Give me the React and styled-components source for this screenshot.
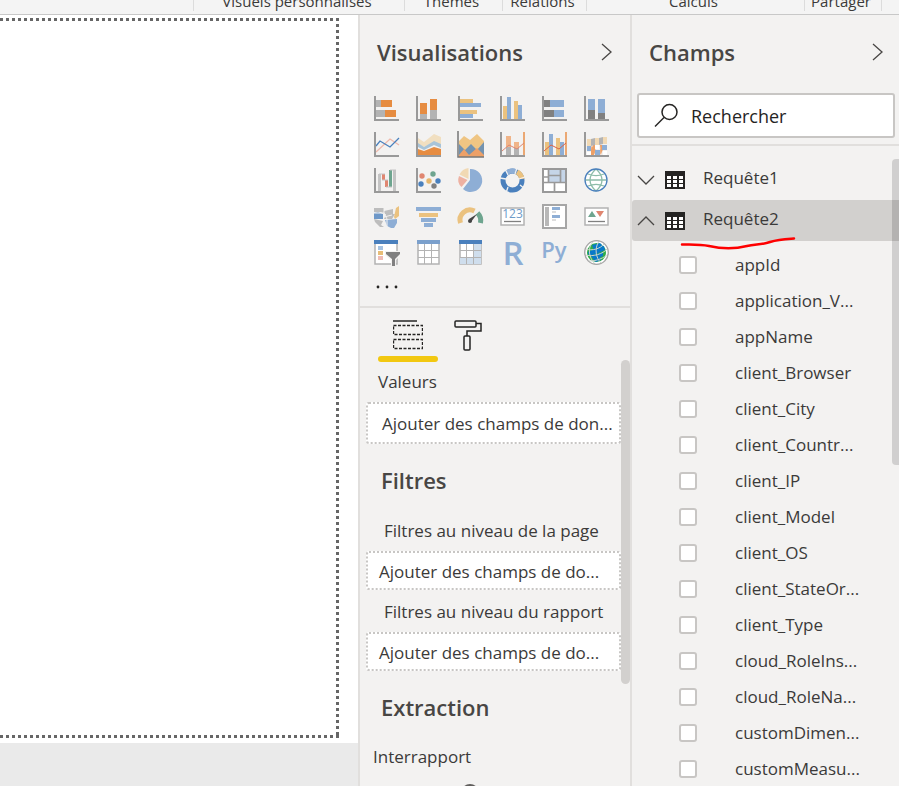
import React from 'react';
import styled, { createGlobalStyle } from 'styled-components';

const GlobalStyle = createGlobalStyle`
  *, *::before, *::after { box-sizing: border-box; }
  body {
    margin: 0;
    font-family: "Open Sans", "Noto Sans", sans-serif;
    font-size: 17px;
    line-height: 24px;
    color: #3b3a39;
    background: #f3f2f1;
  }
  button, input { font: inherit; color: inherit; }
  svg { display: block; }
`;

const Page = styled.div`
  display: flex;
  flex-direction: column;
  height: 100vh;
  overflow: hidden;
`;

const Ribbon = styled.header`
  display: grid;
  grid-template-columns: 194fr 211fr 98fr 84fr 218fr 77fr 17fr;
  flex: none;
  height: 15px;
  overflow: hidden;
  background: #f4f4f4;
  border-bottom: 1px solid #c8c8c8;
`;

const RibbonGroup = styled.div`
  display: flex;
  align-items: flex-end;
  justify-content: center;
  height: 11px;
  padding-right: 4px;
  border-right: 1px solid #dcdcdc;
  font-size: 15px;
  line-height: 20px;
  white-space: nowrap;

  &:last-child { border-right: 0; }
`;

const Workspace = styled.div`
  display: flex;
  flex: 1;
  min-height: 0;
`;

const CanvasArea = styled.main`
  display: flex;
  flex: 1;
  min-width: 0;
  padding-bottom: 43px;
  background: #eaeaea;
`;

const Sheet = styled.div`
  flex: 1;
  padding: 3px 19px 5px 0;
  background: #fff;
`;

const dots = (dir) => `repeating-linear-gradient(${dir}, #666 0 3px, transparent 3px 6px)`;

const PageOutline = styled.div`
  height: 100%;
  background:
    ${dots('to left')} top / 100% 3px no-repeat,
    ${dots('to left')} bottom / 100% 3px no-repeat,
    ${dots('to bottom')} right / 3px 100% no-repeat;
`;

const Panel = styled.aside`
  display: flex;
  flex-direction: column;
  flex: none;
  width: ${(p) => p.$width}px;
  border-left: 2px solid #e1dfdd;
  background: #f3f2f1;
  overflow: hidden;
`;

const PanelHeader = styled.div`
  display: flex;
  align-items: center;
  justify-content: space-between;
  flex: none;
  height: 76px;
  padding: 0 ${(p) => p.$end}px 3px 17px;
`;

const Title = styled.h2`
  margin: 0;
  font-size: 22px;
  line-height: 32px;
  font-weight: 600;
  color: #484644;
`;

const PlainButton = styled.button`
  display: flex;
  padding: 0;
  border: 0;
  background: none;
  cursor: pointer;
`;

const Gallery = styled.div`
  display: grid;
  grid-template-columns: repeat(6, 42px);
  grid-auto-rows: 36px;
  flex: none;
  padding: 5px 0 0 14px;
`;

const MoreButton = styled(PlainButton)`
  margin: 8px 0 16px 16px;
`;

const Tabs = styled.div`
  display: flex;
  flex: none;
  padding: 12px 0 0 18px;
  border-top: 2px solid #e1dfdd;
`;

const Tab = styled(PlainButton)`
  position: relative;
  justify-content: center;
  width: 60px;
  height: 42px;

  &::after {
    content: "";
    position: absolute;
    inset: auto 0 0;
    height: 6px;
    border-radius: 3px;
    background: ${(p) => (p.$active ? '#f2c811' : 'transparent')};
  }
`;

const Wells = styled.div`
  display: flex;
  flex: 1;
  min-height: 0;
  margin-top: -2px;
`;

const WellList = styled.div`
  flex: 1;
  min-width: 0;
  padding: 2px 0 0 6px;
`;

const Thumb = styled.div`
  width: 9px;
  height: 324px;
  border-radius: 5px;
  background: #d2d0ce;
`;

const WellLabel = styled.div`
  padding: ${(p) => p.$pad};
  white-space: nowrap;
`;

const DropZone = styled.div`
  display: flex;
  align-items: center;
  height: ${(p) => (p.$large ? 42 : 39)}px;
  padding: 2px 0 0 ${(p) => (p.$large ? 14 : 11)}px;
  border: 2px dotted #c8c6c4;
  border-radius: 3px;
  background: #fff;
  white-space: nowrap;
`;

const SectionTitle = styled(Title)`
  padding: ${(p) => p.$pad};
`;

const ToggleKnob = styled.div`
  width: 18px;
  height: 18px;
  margin: 15px 0 0 95px;
  border-radius: 50%;
  background: #605e5c;
`;

const SearchBar = styled.div`
  flex: none;
  padding: 2px 4px 6px 5px;
  border-bottom: 2px solid #e1dfdd;
`;

const SearchBox = styled.label`
  display: flex;
  align-items: center;
  gap: 12px;
  height: 45px;
  padding-left: 15px;
  border: 2px solid #c8c6c4;
  border-radius: 3px;
  background: #fff;
`;

const SearchInput = styled.input`
  flex: 1;
  min-width: 0;
  padding: 0;
  border: 0;
  outline: 0;
  background: transparent;
  font-size: 18px;

  &::placeholder { color: #252423; opacity: 1; }
`;

const FieldTree = styled.div`
  position: relative;
  flex: 1;
  min-height: 0;
  padding-top: 13px;
`;

const TreeThumb = styled.div`
  position: absolute;
  top: 13px;
  right: 0;
  width: 7px;
  height: 306px;
  border-radius: 4px 0 0 4px;
  background: rgba(0, 0, 0, 0.14);
`;

const TableRow = styled.button`
  position: relative;
  display: flex;
  align-items: center;
  width: 100%;
  height: 41px;
  padding: 0 0 0 5px;
  border: 0;
  border-radius: 3px 0 0 3px;
  background: ${(p) => (p.$selected ? '#d2d0ce' : 'transparent')};
`;

const TableName = styled.span`
  margin-left: 18px;
  padding-bottom: 4px;
`;

const Underline = styled.svg`
  position: absolute;
  left: 48px;
  top: 35px;
  z-index: 1;
`;

const FieldList = styled.ul`
  margin: 0;
  padding: 6px 0 0 47px;
  list-style: none;
`;

const Field = styled.label`
  display: flex;
  align-items: center;
  gap: 38px;
  height: 36px;
  white-space: nowrap;
`;

const Check = styled.input`
  appearance: none;
  flex: none;
  width: 18px;
  height: 18px;
  margin: 0;
  border: 2px solid #c8c6c4;
  border-radius: 3px;
  background: #fff;
`;

const O = '#e68c41';
const G = '#b3b3b3';
const D = '#808080';
const B = '#8eaed5';
const Y = '#ebc27f';
const DB = '#4a80bd';
const RED = '#e08670';
const GR = '#6ea58f';
const AX = '#999';

const Axes = () => <path d="M1 0V24H25" fill="none" stroke={AX} strokeWidth="2" />;
const Bars = ({ items }) => items.map(([x, y, w, h, fill], i) => (
  <rect key={i} x={x} y={y} width={w} height={h} fill={fill} />
));
const Chart = ({ items }) => <><Bars items={items} /><Axes /></>;

const visuals = [
  ['Barres empilées', <Chart items={[[2, 4, 5, 7, G], [7, 4, 11, 7, O], [2, 14, 9, 7, G], [11, 14, 11, 7, O]]} />],
  ['Histogramme empilé', <Chart items={[[4, 7, 7, 11, O], [4, 18, 7, 5, G], [14, 3, 7, 11, O], [14, 14, 7, 9, G]]} />],
  ['Barres groupées', <Chart items={[[2, 3, 13, 4, Y], [2, 7, 21, 4, B], [2, 14, 17, 4, Y], [2, 18, 13, 4, B]]} />],
  ['Histogramme groupé', <Chart items={[[3, 10, 4, 13, Y], [7, 1, 4, 22, B], [14, 5, 4, 18, Y], [18, 9, 4, 14, B]]} />],
  ['Barres empilées 100 %', <Chart items={[[2, 4, 6, 7, D], [8, 4, 14, 7, B], [2, 14, 10, 7, D], [12, 14, 10, 7, B]]} />],
  ['Histogramme empilé 100 %', <Chart items={[[4, 3, 7, 11, B], [4, 14, 7, 9, D], [14, 3, 7, 14, B], [14, 17, 7, 6, D]]} />],
  ['Courbes', <>
    <path d="M2 20L16 7l9 6" fill="none" stroke="#efb9ab" strokeWidth="1.3" />
    <path d="M2 14l4-5 10 6 9-9" fill="none" stroke={DB} strokeWidth="1.3" /><Axes /></>],
  ['Aires', <>
    <path d="M2 6l6 4L18 2l7 3v8l-7-3-10 5-6-3z" fill="#f1dfc0" />
    <path d="M2 11l6 4 10-6 7 3v4l-7-3-10 5-6-3z" fill="#a8c4d8" />
    <path d="M2 17l6 2 10-4 7 2v6H2z" fill={O} /><Axes /></>],
  ['Aires empilées', <>
    <path d="M1 9l5-5 6 4 7-6 7 7v16H1z" fill="#efc583" />
    <path d="M1 12l6 6 6-6 6 6 7-8v15H1z" fill="#7393b0" />
    <path d="M1 23l5-6 5 6 8-7 7 7v2H1z" fill="#eda067" />
    <path d="M0 -1V25H26" fill="none" stroke="#777" strokeWidth="1.5" /></>],
  ['Courbe et histogramme empilé', <>
    <Chart items={[[6, 4, 5, 11, '#f0b488'], [6, 15, 5, 8, G], [14, 10, 5, 6, '#f0b488'], [14, 16, 5, 7, G]]} />
    <path d="M24 0V23" stroke="#eba873" strokeWidth="2" />
    <path d="M2 19l7-6 8 4 7-6" fill="none" stroke={RED} /></>],
  ['Courbe et histogramme groupé', <>
    <Chart items={[[3, 10, 4, 13, Y], [7, 2, 4, 21, B], [14, 6, 4, 17, Y], [18, 10, 4, 13, B]]} />
    <path d="M24 0V23" stroke="#eba873" strokeWidth="2" />
    <path d="M2 19l7-6 8 4 7-6" fill="none" stroke="#dd6246" /></>],
  ['Ruban', <>
    <path d="M7 14l5 4v5l-5-5zM16 18l3-5v5l-3 5z" fill="#f0b488" />
    <path d="M7 18l2-5h3l-2 10H7zM16 13h3l-2 10z" fill="#eda067" />
    <Bars items={[[3, 7, 4, 7, '#f1d9b4'], [11, 6, 4, 7, '#f1d9b4'], [19, 5, 4, 7, '#f1d9b4'], [3, 14, 4, 5, B], [18, 13, 5, 5, B], [11, 18, 5, 5, B], [3, 20, 4, 3, '#fff'], [19, 19, 4, 4, '#fff'], [11, 13, 4, 4, '#fff']]} />
    <path d="M7 7l4-1v7l-4 1zM15 6l4-1v7l-4 1z" fill={G} /><Axes /></>],
  ['Cascade', <>
    <Chart items={[[4, 6, 3, 17, '#c4c4c4'], [8, 6, 3, 6, RED], [11, 12, 3, 7, RED], [15, 2, 3, 17, GR], [19, 2, 3, 21, '#c4c4c4']]} />
    <path d="M5 6h6M8 12h6M12 19h6M16 2h6" stroke="#c4c4c4" /></>],
  ['Nuage de points', <>
    <circle cx="6" cy="8" r="2.7" fill={RED} /><circle cx="17" cy="6" r="2.7" fill={GR} />
    <circle cx="13" cy="13" r="2.7" fill="#e5b66d" /><circle cx="5" cy="16" r="2.7" fill={DB} />
    <circle cx="22" cy="13" r="2.7" fill={DB} /><circle cx="18" cy="18" r="2.7" fill={D} /><Axes /></>],
  ['Secteurs', <>
    <path d="M12 1A11.5 11.5 0 1 1 5 21L12 12z" fill={B} />
    <path d="M10.5 11V0A11 11 0 0 0 1.5 6.5z" fill="#f1d9b4" />
    <path d="M9.5 12L1 8A10 10 0 0 0 3.5 19z" fill="#eeb1a2" /></>],
  ['Anneau', <>
    <circle cx="12.5" cy="12.5" r="9.5" fill="none" stroke={DB} strokeWidth="5" />
    <path d="M7 4.7A9.5 9.5 0 0 1 15.5 3.5" fill="none" stroke={B} strokeWidth="5" />
    <path d="M17 4A9.5 9.5 0 0 1 22 11" fill="none" stroke={Y} strokeWidth="5" />
    <path d="M5 1l3 6M17 0l-2 6M25 9l-6 2M25 21l-5-4M6 25l2-6M0 10l6 1" stroke="#f3f2f1" strokeWidth="1.3" /></>],
  ['Treemap', <>
    <rect x="1" y="1" width="23" height="23" fill="#fff" stroke={AX} strokeWidth="2" />
    <path d="M7 2h16v12H7z" fill="#c5d5e8" />
    <path d="M6.5 1v13M1 14.5h23M18.500 1v13M6 7.500h12M2 9h4M12.500 14v10" stroke={AX} strokeWidth="1.7" /></>],
  ['Carte', <>
    <circle cx="12" cy="12" r="11" fill="#fff" />
    <path d="M1 12h22M4 6c5 2 11 2 16 0M4 18c5-2 11-2 16 0M12 1c-8 7-8 15 0 22M12 1c8 7 8 15 0 22" fill="none" stroke="#8dbca9" strokeWidth="1.3" />
    <circle cx="12" cy="12" r="11" fill="none" stroke={DB} strokeWidth="1.3" /></>],
  ['Carte choroplèthe', <>
    <path d="M0 4h10v3l9-2v5h-9l-3-2H0zM0 15l9 2-2 4 3 2H6l-5-5zM12 10h9l-3 5h-8z" fill="#bdbdbd" />
    <path d="M0 9l4-1 5 2v5H0z" fill="#6e98c8" />
    <path d="M11 16l12-1v4l-3 5h-3l-4-2z" fill={B} />
    <path d="M22 4l3-2v10l-4 3-1-2z" fill={Y} />
    <path d="M0 9h10l3 6v8M10 4v6M18 11l-8 2" fill="none" stroke="#f3f2f1" /></>],
  ['Entonnoir', <Bars items={[[0, 3, 25, 4, B], [3, 9, 19, 4, Y], [5, 14, 15, 4, B], [8, 19, 9, 4, B]]} />],
  ['Jauge', <>
    <path d="M2.5 19A10 10 0 0 1 16.500 7" fill="none" stroke={Y} strokeWidth="5" />
    <path d="M19.5 9A11 11 0 0 1 22.500 19" fill="none" stroke={GR} strokeWidth="5" />
    <path d="M19 10l-6 8-2-3z" fill="#444" /><circle cx="12" cy="17" r="2" fill="#444" /></>],
  ['Carte de valeur', <>
    <rect x="1" y="4" width="23" height="17" fill="#fff" stroke={G} strokeWidth="1.5" />
    <text x="12.5" y="14" textAnchor="middle" fontSize="12" fill="#6d9bc9">123</text>
    <path d="M4 17.5h17" stroke={D} strokeWidth="1.3" /></>],
  ['Carte à plusieurs lignes', <>
    <rect x="1" y="1" width="23" height="23" fill="#fff" stroke="#a6a6a6" strokeWidth="2" />
    <Bars items={[[3, 3, 4, 19, '#b8b8b8'], [10, 3, 8, 3, B], [10, 7, 4, 2, '#ddd'], [10, 11, 8, 3, B], [10, 15, 4, 2, '#ddd']]} /></>],
  ['Indicateur de performance', <>
    <rect x="1" y="4" width="23" height="17" fill="#fff" stroke={G} strokeWidth="1.5" />
    <path d="M4 13l4-6 4 6z" fill={GR} /><path d="M12 7h8l-4 6z" fill={RED} />
    <path d="M4 17.5h17" stroke={D} strokeWidth="1.3" /></>],
  ['Segment', <>
    <rect x="1" y="2" width="22" height="22" fill="#fff" stroke={G} strokeWidth="1.5" />
    <Bars items={[[0, 0, 24, 4, DB], [4, 6, 5, 4, '#a6c3e2'], [4, 11, 5, 4, '#e8bd77'], [4, 16, 5, 4, '#f0bcb5']]} />
    <path d="M11 11h16v4l-5 5v7h-5v-7l-6-5z" fill="#f3f2f1" />
    <path d="M12 12h14v2l-5 5v7h-3v-7l-6-5z" fill={D} /></>],
  ['Tableau', <>
    <rect x="2" y="3" width="21" height="21" fill="#fff" stroke={G} strokeWidth="1.5" />
    <path d="M2 10.5h21M2 17.500h21M8.500 4v20M15.500 4v20" stroke={G} />
    <rect x="1" y="0" width="23" height="4" fill="#7ba0cc" /></>],
  ['Matrice', <>
    <rect x="2" y="3" width="21" height="21" fill="#fff" stroke={G} strokeWidth="1.5" />
    <path d="M16 4h7v20H2v-6h14z" fill="#cfdeed" />
    <path d="M2 10.5h21M2 17.500h21M8.500 4v20M15.500 4v20" stroke={G} />
    <rect x="1" y="0" width="23" height="4" fill={DB} /></>],
  ['Visuel R', <text x="13" y="25" textAnchor="middle" fontSize="33" fontWeight="600" fill={B}>R</text>],
  ['Visuel Python', <text x="12" y="18" textAnchor="middle" fontSize="22" fontWeight="600" fill={B}>Py</text>],
  ['ArcGIS Maps', <>
    <circle cx="12.5" cy="12.5" r="11" fill="#fff" />
    <circle cx="12.5" cy="12.5" r="9.5" fill="#2fac48" />
    <path d="M8 5l8-2 3 3-9 4zM4 12l6-3 10-3 1 4-9 4-7 2zM7 16l12-4v4l-9 4z" fill="#0879c9" />
    <path d="M9 20l7-3 1 3-5 2z" fill="#0879c9" />
    <path d="M2 9c6 2 14 0 18-5M1 15c8 2 18-1 22-6M5 21c8 0 15-3 19-7M9 2C3 8 5 18 11 24M15 1c-5 8-3 17 2 22" fill="none" stroke="#ccd6cb" />
    <circle cx="12.5" cy="12.5" r="11.800" fill="none" stroke="#a5a5a5" strokeWidth="1.3" /></>],
];

const Chevron = ({ d, w, h }) => (
  <svg width={w} height={h} aria-hidden="true"><path d={d} fill="none" stroke="#484644" strokeWidth="1.3" /></svg>
);

const TableIcon = () => (
  <svg width="20" height="18" aria-hidden="true">
    <rect width="20" height="18" fill="#252423" />
    <path d="M2 5h4v3H2zM8 5h4v3H8zM14 5h4v3h-4zM2 9h4v3H2zM8 9h4v3H8zM14 9h4v3h-4zM2 13h4v3H2zM8 13h4v3H8zM14 13h4v3h-4z" fill="#fff" />
  </svg>
);

const TableIconSlot = styled.span`
  margin-left: 10px;
`;

const groups = ['', 'Visuels personnalisés', 'Thèmes', 'Relations', 'Calculs', 'Partager', ''];

const fields = [
  'appId', 'application_V...', 'appName', 'client_Browser', 'client_City', 'client_Countr...',
  'client_IP', 'client_Model', 'client_OS', 'client_StateOr...', 'client_Type', 'cloud_RoleIns...',
  'cloud_RoleNa...', 'customDimen...', 'customMeasu...',
];

const CollapseButton = ({ label }) => (
  <PlainButton aria-label={label}><Chevron w={12} h={20} d="M1 2l9 8-9 8" /></PlainButton>
);

export default function App() {
  return (
    <Page>
      <GlobalStyle />
      <Ribbon>
        {groups.map((g, i) => <RibbonGroup key={i}>{g}</RibbonGroup>)}
      </Ribbon>
      <Workspace>
        <CanvasArea><Sheet><PageOutline /></Sheet></CanvasArea>

        <Panel $width={272}>
          <PanelHeader $end={17}>
            <Title>Visualisations</Title>
            <CollapseButton label="Réduire Visualisations" />
          </PanelHeader>
          <Gallery>
            {visuals.map(([name, art]) => (
              <PlainButton key={name} aria-label={name}>
                <svg width="26" height="26" overflow="visible" aria-hidden="true">{art}</svg>
              </PlainButton>
            ))}
          </Gallery>
          <MoreButton aria-label="Plus d'options">
            <svg width="24" height="6" fill="#252423" aria-hidden="true">
              <circle cx="2" cy="3" r="1.4" /><circle cx="11" cy="3" r="1.4" /><circle cx="20" cy="3" r="1.4" />
            </svg>
          </MoreButton>
          <Tabs>
            <Tab $active aria-label="Champs">
              <svg width="30" height="30" fill="none" stroke="#252423" aria-hidden="true">
                <path d="M0 1h24" strokeWidth="1.5" />
                <path d="M.5 5.500h29v9H.500zM.500 19.500h29v9H.500z" strokeWidth="1.4" strokeDasharray="3 1.5" />
              </svg>
            </Tab>
            <Tab aria-label="Format">
              <svg width="30" height="31" fill="none" stroke="#252423" strokeWidth="1.5" aria-hidden="true">
                <rect x="2" y="1" width="21" height="6" rx="1" />
                <path d="M23 3.500h5v7.500H14v5" />
                <rect x="11" y="16" width="6" height="14" rx="1" />
              </svg>
            </Tab>
          </Tabs>
          <Wells>
            <WellList>
              <WellLabel $pad="8px 0 8px 12px">Valeurs</WellLabel>
              <DropZone $large>Ajouter des champs de don...</DropZone>
              <SectionTitle $pad="20px 0 23px 15px">Filtres</SectionTitle>
              <WellLabel $pad="0 0 8px 18px">Filtres au niveau de la page</WellLabel>
              <DropZone>Ajouter des champs de do...</DropZone>
              <WellLabel $pad="10px 0 8px 18px">Filtres au niveau du rapport</WellLabel>
              <DropZone>Ajouter des champs de do...</DropZone>
              <SectionTitle $pad="20px 0 22px 15px">Extraction</SectionTitle>
              <WellLabel $pad="0 0 0 7px">Interrapport</WellLabel>
              <ToggleKnob />
            </WellList>
            <Thumb />
          </Wells>
        </Panel>

        <Panel $width={269}>
          <PanelHeader $end={15}>
            <Title>Champs</Title>
            <CollapseButton label="Réduire Champs" />
          </PanelHeader>
          <SearchBar>
            <SearchBox>
              <svg width="25" height="25" fill="none" stroke="#252423" strokeWidth="1.5" aria-hidden="true">
                <circle cx="15.5" cy="9" r="7.500" /><path d="M10 14.500L1 23.500" />
              </svg>
              <SearchInput type="search" placeholder="Rechercher" aria-label="Rechercher" />
            </SearchBox>
          </SearchBar>
          <FieldTree>
            <TableRow aria-expanded="false">
              <Chevron w={18} h={12} d="M1 2l8 8 8-8" />
              <TableIconSlot><TableIcon /></TableIconSlot>
              <TableName>Requête1</TableName>
            </TableRow>
            <TableRow $selected aria-expanded="true">
              <Chevron w={18} h={12} d="M1 10l8-8 8 8" />
              <TableIconSlot><TableIcon /></TableIconSlot>
              <TableName>Requête2</TableName>
              <Underline width="118" height="16" fill="none" stroke="#fe0000" strokeWidth="2.5" strokeLinecap="round">
                <path d="M2 9.500C12 9.500 20 9 29 11C42 14 55 14 67 11C75 9 82 10 90 7C99 4 105 4 114 3.500" />
              </Underline>
            </TableRow>
            <FieldList>
              {fields.map((f) => (
                <li key={f}><Field><Check type="checkbox" />{f}</Field></li>
              ))}
            </FieldList>
            <TreeThumb />
          </FieldTree>
        </Panel>
      </Workspace>
    </Page>
  );
}
